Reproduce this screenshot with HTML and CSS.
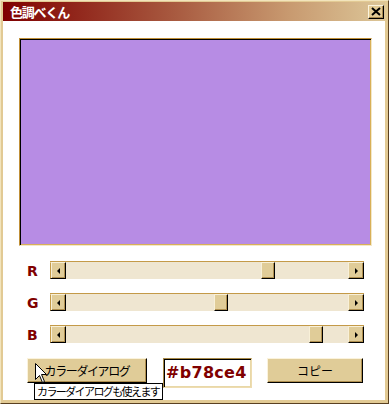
FILE: index.html
```html
<!DOCTYPE html>
<html lang="ja">
<head>
<meta charset="utf-8">
<title>色調べくん</title>
<link rel="stylesheet" href="styles.css">
</head>
<body>
<div class="window">
  <div class="titlebar">
    <span class="title">色調べくん</span>
    <span class="close">
      <svg width="10" height="9" viewBox="0 0 10 9"><path d="M1 1 L9 8 M9 1 L1 8" stroke="#000" stroke-width="2" fill="none"/></svg>
    </span>
  </div>
  <div class="client">
    <div class="swatch" style="background:#b78ce4"></div>
    <div class="sliders">
      <div class="row">
        <span class="lab">R</span>
        <div class="sb">
          <span class="arrow"><i class="tri left"></i></span>
          <span class="track"><span class="thumb" style="left:195px"></span></span>
          <span class="arrow"><i class="tri right"></i></span>
        </div>
      </div>
      <div class="row">
        <span class="lab">G</span>
        <div class="sb">
          <span class="arrow"><i class="tri left"></i></span>
          <span class="track"><span class="thumb" style="left:148px"></span></span>
          <span class="arrow"><i class="tri right"></i></span>
        </div>
      </div>
      <div class="row">
        <span class="lab">B</span>
        <div class="sb">
          <span class="arrow"><i class="tri left"></i></span>
          <span class="track"><span class="thumb" style="left:243px"></span></span>
          <span class="arrow"><i class="tri right"></i></span>
        </div>
      </div>
    </div>
    <div class="actions">
      <button class="btn dlg">カラーダイアログ</button>
      <div class="hex">#b78ce4</div>
      <button class="btn copy">コピー</button>
      <svg class="cursor" width="12" height="20" viewBox="0 0 12 20"><path d="M0.5 0.5 L0.5 16.5 L4.5 12.5 L7.5 19.5 L9.5 18.5 L6.5 11.5 L11.5 11.5 Z" fill="#fff" stroke="#000" stroke-width="1"/></svg>
      <div class="tooltip">カラーダイアログも使えます</div>
    </div>
  </div>
</div>
</body>
</html>
```

FILE: styles.css
```css
html, body {
  margin: 0;
  padding: 0;
  background: #ffffff;
}

.window {
  width: 389px;
  height: 404px;
  box-sizing: border-box;
  border: 1px solid;
  border-color: #f2e4bc #5a4020 #5a4020 #f2e4bc;
  background: #e2ca94;
  padding: 1px 3px 3px 2px;
  display: flex;
  flex-direction: column;
  font-family: "Noto Sans CJK JP", "DejaVu Sans", sans-serif;
}

.titlebar {
  height: 19px;
  flex: none;
  display: flex;
  align-items: center;
  justify-content: space-between;
  padding: 0 1px 0 7px;
  background: linear-gradient(to right, #800000 0%, #a85a40 45%, #c89a70 75%, #dcc698 100%);
}

.title {
  color: #ffffff;
  font-weight: bold;
  font-size: 13px;
  letter-spacing: -1.2px;
  line-height: 19px;
}

.close {
  width: 16px;
  height: 14px;
  box-sizing: border-box;
  background: #e2ca94;
  border: 1px solid;
  border-color: #fbf3dc #000 #000 #fbf3dc;
  box-shadow: inset -1px -1px #a88a50;
  display: flex;
  align-items: center;
  justify-content: center;
}

.client {
  flex: 1;
  background: #ffffff;
  padding: 17px 0 0 16px;
  box-sizing: border-box;
}

.swatch {
  width: 353px;
  height: 208px;
  box-sizing: border-box;
  border: 1px solid;
  border-color: #c09038 #f4e8c8 #f4e8c8 #c09038;
  box-shadow: inset 1px 1px #000, inset -1px -1px #d8b058;
}

.sliders {
  margin: 15px 0 0 8px;
  display: flex;
  flex-direction: column;
  gap: 14px;
}

.row {
  display: flex;
  align-items: center;
  height: 18px;
}

.lab {
  width: 23px;
  flex: none;
  color: #800000;
  font-family: "DejaVu Sans", sans-serif;
  font-weight: bold;
  font-size: 14px;
  line-height: 18px;
  padding-top: 2px;
}

.sb {
  width: 314px;
  height: 18px;
  box-sizing: border-box;
  display: flex;
  background: #efe6d1;
  border-top: 1px solid #c49a48;
}

.arrow {
  width: 16px;
  height: 17px;
  flex: none;
  box-sizing: border-box;
  background: #e0cc98;
  border: 1px solid;
  border-color: #f8f0d8 #000 #000 #f8f0d8;
  box-shadow: inset -1px -1px #b09050;
  display: flex;
  align-items: center;
  justify-content: center;
}

.arrow:first-child {
  border-left-color: #c49a48;
  box-shadow: inset 1px 0 #f8f0d8, inset -1px -1px #b09050;
}

.tri {
  width: 0;
  height: 0;
  border-top: 3px solid transparent;
  border-bottom: 3px solid transparent;
}

.tri.left {
  border-right: 3px solid #000;
}

.tri.right {
  border-left: 3px solid #000;
}

.track {
  flex: 1;
  position: relative;
}

.thumb {
  position: absolute;
  top: 0;
  width: 14px;
  height: 17px;
  box-sizing: border-box;
  background: #e0cc98;
  border: 1px solid;
  border-color: #f8f0d8 #000 #000 #f8f0d8;
  box-shadow: inset -1px -1px #b09050;
}

.actions {
  position: relative;
  margin: 15px 0 0 8px;
  display: flex;
  align-items: flex-start;
}

.btn {
  height: 25px;
  box-sizing: border-box;
  background: #e0cc98;
  border: 1px solid;
  border-color: #fbf3dc #000 #000 #fbf3dc;
  box-shadow: inset -1px -1px #b09050;
  font-family: "Noto Sans CJK JP", sans-serif;
  font-size: 12px;
  color: #000;
  padding: 0;
  line-height: 22px;
  letter-spacing: -1.4px;
}

.dlg {
  width: 120px;
}

.copy {
  width: 96px;
  margin-left: 15px;
  letter-spacing: 0;
}

.hex {
  width: 89px;
  height: 30px;
  margin-left: 16px;
  box-sizing: border-box;
  border: 1px solid;
  border-color: #a88a48 #eedcb0 #eedcb0 #a88a48;
  box-shadow: inset 1px 1px #000, inset -1px -1px #e8d8a8;
  color: #800000;
  font-family: "DejaVu Sans", sans-serif;
  font-weight: bold;
  font-size: 16px;
  line-height: 28px;
  padding-left: 2px;
  letter-spacing: 0.3px;
}

.cursor {
  position: absolute;
  left: 8px;
  top: 5px;
}

.tooltip {
  position: absolute;
  left: 7px;
  top: 25px;
  height: 17px;
  box-sizing: border-box;
  background: #ffffff;
  border: 1px solid #000;
  font-family: "Noto Sans CJK JP", sans-serif;
  font-size: 11px;
  line-height: 15px;
  padding: 0 3px 0 2px;
  letter-spacing: -1.6px;
  white-space: nowrap;
  color: #000;
}
```
